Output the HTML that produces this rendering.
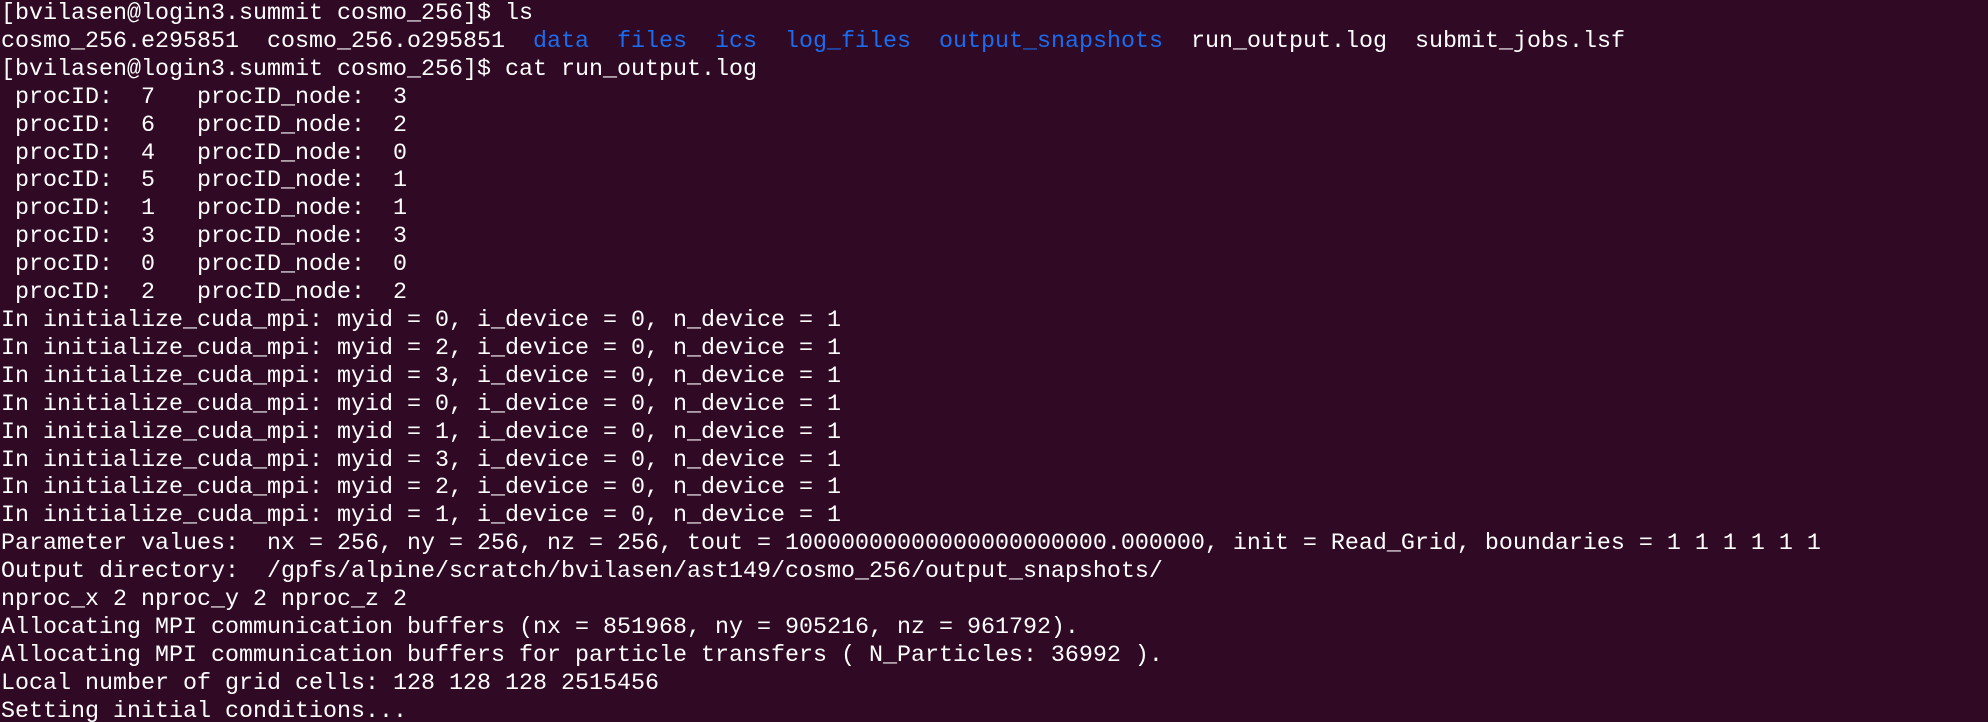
<!DOCTYPE html>
<html><head><meta charset="utf-8"><style>
html,body{margin:0;padding:0;background:#300a24;width:1988px;height:722px;overflow:hidden}
pre{margin:0;padding:1px 0 0 1px;font-family:"Liberation Mono",monospace;font-size:23.33px;line-height:27.9px;color:#ffffff;white-space:pre}
.b{color:#1a6cf0}
</style></head><body><pre>[bvilasen@login3.summit cosmo_256]$ ls
cosmo_256.e295851  cosmo_256.o295851  <span class="b">data</span>  <span class="b">files</span>  <span class="b">ics</span>  <span class="b">log_files</span>  <span class="b">output_snapshots</span>  run_output.log  submit_jobs.lsf
[bvilasen@login3.summit cosmo_256]$ cat run_output.log
 procID:  7   procID_node:  3
 procID:  6   procID_node:  2
 procID:  4   procID_node:  0
 procID:  5   procID_node:  1
 procID:  1   procID_node:  1
 procID:  3   procID_node:  3
 procID:  0   procID_node:  0
 procID:  2   procID_node:  2
In initialize_cuda_mpi: myid = 0, i_device = 0, n_device = 1
In initialize_cuda_mpi: myid = 2, i_device = 0, n_device = 1
In initialize_cuda_mpi: myid = 3, i_device = 0, n_device = 1
In initialize_cuda_mpi: myid = 0, i_device = 0, n_device = 1
In initialize_cuda_mpi: myid = 1, i_device = 0, n_device = 1
In initialize_cuda_mpi: myid = 3, i_device = 0, n_device = 1
In initialize_cuda_mpi: myid = 2, i_device = 0, n_device = 1
In initialize_cuda_mpi: myid = 1, i_device = 0, n_device = 1
Parameter values:  nx = 256, ny = 256, nz = 256, tout = 10000000000000000000000.000000, init = Read_Grid, boundaries = 1 1 1 1 1 1
Output directory:  /gpfs/alpine/scratch/bvilasen/ast149/cosmo_256/output_snapshots/
nproc_x 2 nproc_y 2 nproc_z 2
Allocating MPI communication buffers (nx = 851968, ny = 905216, nz = 961792).
Allocating MPI communication buffers for particle transfers ( N_Particles: 36992 ).
Local number of grid cells: 128 128 128 2515456
Setting initial conditions...</pre></body></html>
